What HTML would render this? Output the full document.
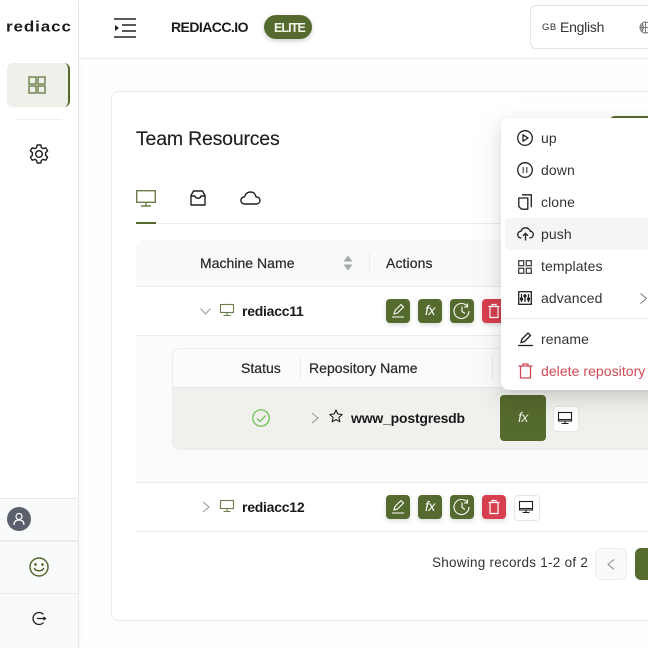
<!DOCTYPE html>
<html><head><meta charset="utf-8"><style>
html,body{margin:0;padding:0;width:648px;height:648px;overflow:hidden;background:#fff}
body{position:relative;font-family:"Liberation Sans",sans-serif;color:#1f1f1f}
.a{position:absolute;box-sizing:border-box}
.t{position:absolute;white-space:nowrap;line-height:20px}
svg{position:absolute;overflow:visible;fill:none}
.btn{position:absolute;width:24px;height:24px;border-radius:4px;background:#556a2e;box-shadow:0 2px 5px rgba(0,0,0,.14)}
.btn.r{background:#d83f4e}
.btn.w{background:#fff;border:1px solid #e6e6e6;box-shadow:none}
.btn svg{left:0;top:0}
.fx{position:absolute;left:0;top:0;width:24px;text-align:center;font:italic 14px/22px "Liberation Sans",sans-serif;color:#fff;letter-spacing:-.5px}
.m{font-size:14px;color:#333;left:541px;letter-spacing:.1px}
.k{stroke:#1f1f1f;stroke-width:1.3}
.h{font-size:14px;color:#262626;-webkit-text-stroke:.2px #262626}
</style></head><body>

<div class="a" style="left:79px;top:59px;width:569px;height:589px;background:#fefefe"></div>
<div class="a" style="left:111px;top:91px;width:560px;height:530px;border:1px solid #e9ebec;border-radius:8px;background:#fff"></div>

<!-- sidebar -->
<div class="a" style="left:0;top:0;width:79px;height:648px;background:#fff;border-right:1px solid #e8e8e8;box-shadow:2px 0 5px rgba(0,0,0,.02)"></div>
<div class="t" style="left:6px;top:17px;font-size:17px;font-weight:700;letter-spacing:.9px;color:#1c1c1c;transform:scaleY(.88)">rediacc</div>
<div class="a" style="left:7px;top:63px;width:63px;height:44px;background:#eef0e9;border-radius:6px;border-right:2.5px solid #556a2e"></div>
<svg style="left:28px;top:76px" width="18" height="18" stroke="#6c7f4a" stroke-width="1.4"><rect x="1" y="1" width="7" height="7"/><rect x="10" y="1" width="7" height="7"/><rect x="1" y="10" width="7" height="7"/><rect x="10" y="10" width="7" height="7"/></svg>
<div class="a" style="left:15px;top:119px;width:47px;height:1px;background:#f0f0f0"></div>
<svg style="left:29px;top:144px" width="20" height="20" viewBox="0 0 20 20" stroke="#1f1f1f" stroke-width="1.4" stroke-linejoin="round"><path d="M8.2 1h3.6l.6 2.600 1.800 1 2.600-.8 1.800 3.100-2 1.800v2.600l2 1.800-1.800 3.100-2.600-.8-1.800 1-.6 2.600H8.200l-.6-2.600-1.800-1-2.600.8-1.800-3.100 2-1.800V8.700l-2-1.800 1.800-3.100 2.600.8 1.800-1z"/><circle cx="10" cy="10" r="3.300"/></svg>

<div class="a" style="left:0;top:498px;width:78px;height:150px;background:#f9fafa"></div>
<div class="a" style="left:0;top:498px;width:78px;height:1px;background:#e9e9e9"></div>
<div class="a" style="left:0;top:540px;width:78px;height:2px;background:#ececec"></div>
<div class="a" style="left:0;top:593px;width:78px;height:1px;background:#eaeaea"></div>
<div class="a" style="left:7px;top:507px;width:24px;height:24px;border-radius:50%;background:#5a606c"></div>
<svg style="left:7px;top:507px" width="24" height="24" stroke="#fff" stroke-width="1.2"><circle cx="12" cy="9.500" r="3"/><path d="M7 18c0-3.500 2-5 5-5s5 1.500 5 5"/></svg>
<svg style="left:29px;top:557px" width="20" height="20" stroke="#556a2e" stroke-width="1.500"><circle cx="10" cy="10" r="9"/><path d="M5.500 11.500c1 3 8 3 9 0" stroke-linecap="round"/><circle cx="6.500" cy="7.500" r=".6"/><circle cx="13.500" cy="7.500" r=".6"/></svg>
<svg style="left:32px;top:611px" width="15" height="15" stroke="#1f1f1f" stroke-width="1.300"><path d="M11.500 3.500A6 6 0 1 0 11.500 11.500"/><path d="M5 7.500h8.500M11.500 6l2 1.500-2 1.500"/></svg>

<!-- header -->
<div class="a" style="left:79px;top:0;width:569px;height:59px;background:#fff;border-bottom:1px solid #ececec;box-shadow:0 2px 4px rgba(0,0,0,.025)"></div>
<svg style="left:114px;top:18px" width="22" height="20" stroke="#222" stroke-width="1.600"><path d="M0 1h22M8 7h14M8 13h14M0 19h22"/><path d="M1 7l4 3-4 3z" fill="#222" stroke="none"/></svg>
<div class="t" style="left:171px;top:17px;font-size:14px;font-weight:700;color:#1a1a1a;letter-spacing:-.55px">REDIACC.IO</div>
<div class="a" style="left:264px;top:15px;width:48px;height:24px;border-radius:12px;background:#556a2e;box-shadow:0 2px 5px rgba(0,0,0,.2)"></div>
<div class="t" style="left:274px;top:18px;font-size:12.500px;font-weight:700;color:#f2f4ec;letter-spacing:-.9px;">ELITE</div>
<div class="a" style="left:530px;top:5px;width:140px;height:44px;border:1px solid #e4e4e4;border-radius:6px;background:#fff"></div>
<div class="t" style="left:542px;top:18px;font-size:9.500px;color:#333;letter-spacing:.5px">GB</div>
<div class="t" style="left:560px;top:17px;font-size:14px;color:#333;letter-spacing:-.25px">English</div>
<svg style="left:639px;top:21px" width="13" height="13" stroke="#777" stroke-width="1"><circle cx="6.500" cy="6.500" r="5.500"/><path d="M1 6.500h11M6.500 1v11M3 2.500c2 3 2 5 0 8M4 3c-2 3-2 4 0 7"/></svg>

<!-- title -->
<div class="t" style="left:136px;top:129px;font-size:19.500px;color:#1f1f1f;letter-spacing:-.2px;-webkit-text-stroke:.15px #1f1f1f">Team Resources</div>
<div class="a" style="left:609px;top:116px;width:50px;height:30px;background:#556a2e;border-radius:6px"></div>

<!-- tabs -->
<svg style="left:136px;top:190px" width="20" height="17" stroke="#6c7f4a" stroke-width="1.400"><rect x=".7" y=".7" width="18.600" height="11.600"/><path d="M10 12.500v3M5 16h10"/></svg>
<svg style="left:190px;top:190px" width="16" height="16" stroke="#1f1f1f" stroke-width="1.400" stroke-linejoin="round"><path d="M3.500 1h9L15 5.500V15H1V5.500zM1 6h4c.5 3 5.500 3 6 0h4"/></svg>
<svg style="left:240px;top:191px" width="21" height="14" stroke="#1f1f1f" stroke-width="1.400"><path d="M5 13C1.500 13 .5 10.500 1 8.500 1.500 6.500 3 6 4.500 5.800 5.500 2.500 8 1 10.500 1c3 0 5 2 5.500 4.800 2.500.2 4 1.500 4 3.700 0 2-1.500 3.500-4 3.500z"/></svg>
<div class="a" style="left:136px;top:223px;width:512px;height:1px;background:#ececec"></div>
<div class="a" style="left:136px;top:222px;width:20px;height:2px;background:#556a2e"></div>

<!-- main table -->
<div class="a" style="left:136px;top:240px;width:512px;height:47px;background:#f8f9fa;border-radius:8px 0 0 0;border-bottom:1px solid #ececec"></div>
<div class="t h" style="left:200px;top:253px;letter-spacing:.03px">Machine Name</div>
<svg style="left:343px;top:255px" width="10" height="16"><path d="M5 .5l4.500 6h-9zM5 15.500l4.500-6h-9z" fill="#a4a9a9"/></svg>
<div class="a" style="left:369px;top:252px;width:1px;height:22px;background:#ececec"></div>
<div class="t h" style="left:386px;top:253px;letter-spacing:.1px">Actions</div>

<!-- row 1 -->
<svg style="left:200px;top:308px" width="11" height="7" stroke="#9a9a9a" stroke-width="1"><path d="M.5.500l5 5.500 5-5.500"/></svg>
<svg style="left:220px;top:304px" width="14" height="12" stroke="#6c7f4a" stroke-width="1.100"><rect x=".5" y=".5" width="13" height="8"/><path d="M7 9v2M3.500 11.500h7"/></svg>
<div class="t" style="left:242px;top:301px;font-size:14px;font-weight:700;color:#1a1a1a;letter-spacing:-.25px">rediacc11</div>
<div class="btn" style="left:386px;top:299px"><svg width="24" height="24" stroke="#fff" stroke-width="1.100"><path d="M6 18h12M8 15l1-3.500 6-6 2.500 2.500-6 6z"/></svg></div>
<div class="btn" style="left:418px;top:299px"><div class="fx">fx</div></div>
<div class="btn" style="left:450px;top:299px"><svg width="24" height="24" stroke="#fff" stroke-width="1.100"><path d="M17.500 7.500A7.500 7.500 0 1 0 19 12M12 7.500V12.500l3 2M17.500 4.500v3.500H14"/></svg></div>
<div class="btn r" style="left:482px;top:299px"><svg width="24" height="24" stroke="#fff" stroke-width="1.200"><path d="M6.500 7.500h11M10 7.500V5.500h4v2M8 8v10.500h8V8"/></svg></div>
<div class="a" style="left:136px;top:335px;width:512px;height:1px;background:#ececec"></div>
<div class="a" style="left:136px;top:336px;width:512px;height:146px;background:#fbfbfb"></div>

<!-- inner table -->
<div class="a" style="left:172px;top:348px;width:476px;height:102px;border:1px solid #ececec;border-right:0;border-radius:8px 0 0 8px;background:#f0f0ed;overflow:hidden">
  <div class="a" style="left:0;top:0;width:476px;height:39px;background:#fafbfb;border-bottom:1px solid #e8e8e8"></div>
</div>
<div class="t h" style="left:241px;top:358px;letter-spacing:.02px">Status</div>
<div class="a" style="left:300px;top:357px;width:1px;height:22px;background:#ececec"></div>
<div class="t h" style="left:309px;top:358px;letter-spacing:.03px">Repository Name</div>
<div class="a" style="left:492px;top:357px;width:1px;height:22px;background:#ececec"></div>
<svg style="left:252px;top:409px" width="18" height="18" stroke="#63bd45" stroke-width="1.200"><circle cx="9" cy="9" r="8.200"/><path d="M5 9.500l3 3 5.500-6"/></svg>
<svg style="left:311px;top:412px" width="8" height="12" stroke="#999" stroke-width="1.100"><path d="M1 1l6 5-6 5"/></svg>
<svg style="left:329px;top:409px" width="14" height="14" stroke="#1f1f1f" stroke-width="1.100" stroke-linejoin="round"><path d="M7 1l1.800 4 4.400.5-3.300 3 1 4.300L7 10.600l-3.900 2.200 1-4.300-3.300-3L5.200 5z"/></svg>
<div class="t" style="left:351px;top:408px;font-size:14px;font-weight:700;color:#1a1a1a;letter-spacing:-.2px">www_postgresdb</div>
<div class="a" style="left:500px;top:395px;width:46px;height:46px;background:#556a2e;border-radius:4px"></div>
<div class="t" style="left:500px;top:407px;width:46px;text-align:center;font:italic 14px/20px 'Liberation Sans',sans-serif;color:#e8ebdf;letter-spacing:-.5px">fx</div>
<div class="btn w" style="left:553px;top:406px"><svg style="left:-1px;top:-1px" width="24" height="24" stroke="#1f1f1f" stroke-width="1.100"><rect x="5.500" y="6.500" width="13" height="8.500"/><path d="M5.500 13.500h13M12 15v2.500M8.500 17.500h7"/></svg></div>

<div class="a" style="left:136px;top:482px;width:512px;height:1px;background:#ececec"></div>

<!-- row 2 -->
<svg style="left:202px;top:501px" width="8" height="12" stroke="#999" stroke-width="1.100"><path d="M1 1l6 5-6 5"/></svg>
<svg style="left:220px;top:500px" width="14" height="12" stroke="#6c7f4a" stroke-width="1.100"><rect x=".5" y=".5" width="13" height="8"/><path d="M7 9v2M3.500 11.500h7"/></svg>
<div class="t" style="left:242px;top:497px;font-size:14px;font-weight:700;color:#1a1a1a;letter-spacing:-.25px">rediacc12</div>
<div class="btn" style="left:386px;top:495px"><svg width="24" height="24" stroke="#fff" stroke-width="1.100"><path d="M6 18h12M8 15l1-3.500 6-6 2.500 2.500-6 6z"/></svg></div>
<div class="btn" style="left:418px;top:495px"><div class="fx">fx</div></div>
<div class="btn" style="left:450px;top:495px"><svg width="24" height="24" stroke="#fff" stroke-width="1.100"><path d="M17.500 7.500A7.500 7.500 0 1 0 19 12M12 7.500V12.500l3 2M17.500 4.500v3.500H14"/></svg></div>
<div class="btn r" style="left:482px;top:495px"><svg width="24" height="24" stroke="#fff" stroke-width="1.200"><path d="M6.500 7.500h11M10 7.500V5.500h4v2M8 8v10.500h8V8"/></svg></div>
<div class="btn w" style="left:514px;top:495px"><svg style="left:-1px;top:-1px" width="24" height="24" stroke="#1f1f1f" stroke-width="1.100"><rect x="5.500" y="6.500" width="13" height="8.500"/><path d="M5.500 13.500h13M12 15v2.500M8.500 17.500h7"/></svg></div>
<div class="a" style="left:136px;top:531px;width:512px;height:1px;background:#ececec"></div>

<!-- pagination -->
<div class="t" style="left:432px;top:553px;font-size:13.500px;color:#333;letter-spacing:.25px">Showing records 1-2 of 2</div>
<div class="a" style="left:595px;top:548px;width:32px;height:32px;border:1px solid #eceded;border-radius:6px;background:#f8f9fa"></div>
<svg style="left:607px;top:559px" width="8" height="11" stroke="#888" stroke-width="1"><path d="M7 .5L1 5.500l6 5"/></svg>
<div class="a" style="left:635px;top:548px;width:30px;height:32px;border-radius:6px;background:#556a2e"></div>

<!-- dropdown menu -->
<div class="a" style="left:501px;top:118px;width:170px;height:272px;background:#fff;border-radius:8px;box-shadow:0 6px 16px rgba(0,0,0,.1),0 3px 6px -4px rgba(0,0,0,.12),0 9px 28px 8px rgba(0,0,0,.05)"></div>
<div class="a" style="left:505px;top:218px;width:160px;height:32px;background:#f5f5f3;border-radius:4px"></div>
<svg class="k" style="left:517px;top:130px" width="16" height="16"><circle cx="8" cy="8" r="7.300"/><path d="M6 4.800l5 3.200-5 3.200z" stroke-linejoin="round"/></svg>
<div class="t m" style="top:128px">up</div>
<svg class="k" style="left:517px;top:162px" width="16" height="16"><circle cx="8" cy="8" r="7.300"/><path d="M6.300 5v6M9.700 5v6" stroke="#666" stroke-width="1.500"/></svg>
<div class="t m" style="top:160px">down</div>
<svg class="k" style="left:518px;top:194px" width="14" height="16" stroke-linejoin="round"><path d="M4 .8h9.300v12.500M.8 4h9v11.200H3.500L.8 12.500z"/></svg>
<div class="t m" style="top:192px">clone</div>
<svg class="k" style="left:517px;top:227px" width="17" height="14"><path d="M4.500 11C2 11 .7 9.500.7 7.500S2.500 4.300 4 4.200C4.800 2 6.500.8 8.500.8c2.500 0 4.300 1.700 4.700 3.400 1.800.2 3.100 1.500 3.100 3.300 0 2-1.500 3.500-3.800 3.500M8.500 13.500V6.500M6 8.800l2.500-2.500L11 8.800"/></svg>
<div class="t m" style="top:224px">push</div>
<svg style="left:518px;top:260px" width="14" height="14" stroke="#444" stroke-width="1.300"><rect x=".7" y=".7" width="5" height="5"/><rect x="8.300" y=".7" width="5" height="5"/><rect x=".7" y="8.300" width="5" height="5"/><rect x="8.300" y="8.300" width="5" height="5"/></svg>
<div class="t m" style="top:256px">templates</div>
<svg class="k" style="left:518px;top:291px" width="14" height="14"><rect x=".7" y=".7" width="12.600" height="12.600"/><path d="M3.500 3v8M7 3v8M10.500 3v8"/><circle cx="3.500" cy="8" r="1" fill="#1f1f1f"/><circle cx="7" cy="5" r="1" fill="#1f1f1f"/><circle cx="10.500" cy="8" r="1" fill="#1f1f1f"/></svg>
<div class="t m" style="top:288px">advanced</div>
<svg style="left:640px;top:293px" width="7" height="11" stroke="#777" stroke-width="1"><path d="M.5.500l6 5-6 5"/></svg>
<div class="a" style="left:501px;top:318px;width:147px;height:1px;background:#ececec"></div>
<svg class="k" style="left:518px;top:331px" width="15" height="15"><path d="M0 14.500h15M3 11.500l1-3.500 6-6 2.500 2.500-6 6z"/></svg>
<div class="t m" style="top:329px">rename</div>
<svg style="left:518px;top:363px" width="15" height="16" stroke="#d04a55" stroke-width="1.300"><path d="M.5 3h14M5 3V1h5v2M2.500 3.500V15h10V3.500"/></svg>
<div class="t m" style="top:361px;color:#cf4a55;letter-spacing:.05px">delete repository</div>

</body></html>
